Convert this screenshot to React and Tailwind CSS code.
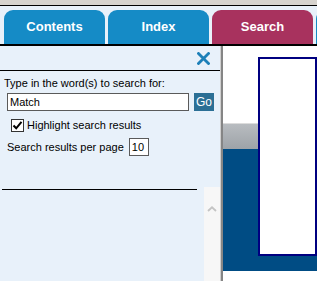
import React from 'react';

const tabs = [
  { label: 'Contents', color: 'bg-[#158bc6]' },
  { label: 'Index', color: 'bg-[#158bc6]' },
  { label: 'Search', color: 'bg-[#a8325e]' },
];

function Tab({ label, color }) {
  return (
    <div
      className={`w-[101px] h-[34px] shrink-0 rounded-t-[9px] ${color} flex items-center justify-center text-white font-bold text-[13px]`}
    >
      {label}
    </div>
  );
}

export default function App() {
  return (
    <div className="w-[317px] h-[281px] overflow-hidden flex flex-col bg-[#e8f1fa] font-['Liberation_Sans',Arial,sans-serif] text-[11px] text-black">
      {/* window strip */}
      <div className="h-[6px] shrink-0 bg-[#d6d3ce] border-b border-black" />

      {/* tab row */}
      <div className="h-[38px] shrink-0 flex items-end gap-[3px] pl-[4px]">
        {tabs.map((t) => (
          <Tab key={t.label} {...t} />
        ))}
        <div className="w-[10px] h-[34px] shrink-0 rounded-tl-[9px] bg-[#158bc6]" />
      </div>
      <div className="h-[2px] shrink-0 bg-black" />

      <div className="flex-1 flex min-h-0">
        {/* search panel */}
        <div className="w-[220px] shrink-0 flex flex-col">
          <div className="h-[25px] shrink-0 flex items-center justify-end pr-[10px] border-b border-black">
            <svg width="13" height="13" viewBox="0 0 13 13" className="mt-[1px]">
              <path d="M1.5 1.5 L11.5 11.5 M11.5 1.5 L1.5 11.5" stroke="#1d80b8" strokeWidth="2.8" strokeLinecap="square" />
            </svg>
          </div>

          <div className="mt-[6px] ml-[4px] leading-[13px]">Type in the word(s) to search for:</div>

          <div className="mt-[3px] ml-[7px] flex items-center gap-[5px]">
            <div className="w-[182px] h-[18px] bg-white border border-[#5a5a5a] flex items-center pl-[2px] leading-none">
              Match
            </div>
            <div className="w-[20px] h-[18px] bg-[#2b6f95] text-white text-[12px] flex items-center justify-center">
              Go
            </div>
          </div>

          <div className="mt-[8px] ml-[11px] flex items-center gap-[3px]">
            <span className="w-[13px] h-[13px] bg-white border border-[#333] flex items-center justify-center">
              <svg width="11" height="11" viewBox="0 0 11 11">
                <path d="M1.5 5.5 L4.2 8.3 L9.5 1.8" stroke="#000" strokeWidth="2" fill="none" />
              </svg>
            </span>
            <span className="leading-[13px]">Highlight search results</span>
          </div>

          <div className="mt-[6px] ml-[7px] flex items-center gap-[5px]">
            <span className="leading-[13px]">Search results per page</span>
            <div className="w-[20px] h-[18px] bg-white border border-[#5a5a5a] flex items-center pl-[2px] leading-none">
              10
            </div>
          </div>

          <div className="mt-[31px] flex-1 flex min-h-0">
            <div className="flex-1">
              <div className="mt-[2px] ml-[2px] w-[195px] h-px bg-black" />
            </div>
            <div className="w-[16px] bg-[#f7f7f7] flex justify-center pt-[19px]">
              <svg width="10" height="6" viewBox="0 0 10 6">
                <path d="M1 5 L5 1.3 L9 5" stroke="#c4c4c4" strokeWidth="1.8" fill="none" />
              </svg>
            </div>
          </div>
        </div>

        {/* frame border */}
        <div className="w-px shrink-0 bg-[#cfcfcf]" />
        <div className="w-[2px] shrink-0 bg-[#858585]" />

        {/* page preview */}
        <div className="relative flex-1 flex flex-col">
          <div className="h-[77px] bg-white" />
          <div className="h-px bg-[#dcdcdc]" />
          <div className="h-[25px] bg-gradient-to-b from-[#b8bcc0] to-[#9ea3a8]" />
          <div className="h-[122px] bg-[#004c84]" />
          <div className="flex-1 bg-white" />
          <div className="absolute left-[35px] top-[11px] w-[59px] h-[199px] bg-white border-2 border-[#000080]" />
        </div>
      </div>
    </div>
  );
}
